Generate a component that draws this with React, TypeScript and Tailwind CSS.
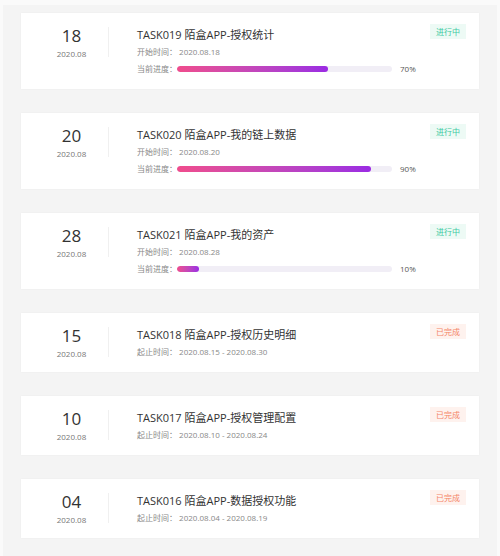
type Task = {
  day: string;
  code: string;
  name: string;
  done: boolean;
  start: string;
  end?: string;
  progress?: number;
};

const tasks: Task[] = [
  { day: '18', code: 'TASK019', name: '陌盒APP-授权统计', done: false, start: '2020.08.18', progress: 70 },
  { day: '20', code: 'TASK020', name: '陌盒APP-我的链上数据', done: false, start: '2020.08.20', progress: 90 },
  { day: '28', code: 'TASK021', name: '陌盒APP-我的资产', done: false, start: '2020.08.28', progress: 10 },
  { day: '15', code: 'TASK018', name: '陌盒APP-授权历史明细', done: true, start: '2020.08.15', end: '2020.08.30' },
  { day: '10', code: 'TASK017', name: '陌盒APP-授权管理配置', done: true, start: '2020.08.10', end: '2020.08.24' },
  { day: '04', code: 'TASK016', name: '陌盒APP-数据授权功能', done: true, start: '2020.08.04', end: '2020.08.19' },
];

function TaskCard({ task }: { task: Task }) {
  return (
    <div className="flex items-start bg-white pt-[13px] pb-[12px] pr-[13px] shadow-[0_0_2px_rgba(0,0,0,0.04)]">
      <div className="w-[87px] pl-[14px] flex flex-col items-center">
        <div className="text-[17px] leading-[20px] text-[#333]">{task.day}</div>
        <div className="mt-[2px] text-[8px] leading-[12px] text-[#777]">2020.08</div>
      </div>
      <div className="mt-px h-[30px] w-px bg-[#f0f0f0]" />
      <div className="ml-[28px] flex-1">
        <div className="text-[11px] leading-[17px] text-[#333]">
          {task.code} {task.name}
        </div>
        {task.done ? (
          <div className="text-[8px] leading-[17px] text-[#888]">
            起止时间： {task.start} - {task.end}
          </div>
        ) : (
          <>
            <div className="text-[8px] leading-[17px] text-[#888]">开始时间： {task.start}</div>
            <div className="flex items-center h-[17px] text-[8px] text-[#888]">
              <span className="w-[40px]">当前进度：</span>
              <div className="w-[215px] h-[6px] rounded-full bg-[#f1eef6] overflow-hidden">
                <div
                  className="h-full rounded-full bg-gradient-to-r from-[#f04c8c] to-[#9b2ae3]"
                  style={{ width: `${task.progress}%` }}
                />
              </div>
              <span className="ml-[8px] text-[#555]">{task.progress}%</span>
            </div>
          </>
        )}
      </div>
      {task.done ? (
        <span className="mt-[-2px] px-[6px] h-[15px] leading-[15px] text-[8px] text-[#f48467] bg-[#fef2ee]">
          已完成
        </span>
      ) : (
        <span className="mt-[-2px] px-[6px] h-[15px] leading-[15px] text-[8px] text-[#3cc9a1] bg-[#edfaf5]">
          进行中
        </span>
      )}
    </div>
  );
}

export default function App() {
  return (
    <div
      className="w-[500px] h-[556px] bg-[#fafafa] overflow-hidden"
      style={{ fontFamily: '"Open Sans", "Noto Sans CJK SC", sans-serif' }}
    >
      <div className="mx-[3px] mt-[5px] h-[551px] bg-[#f4f4f4] px-[18px] pt-[8px] flex flex-col gap-[24px]">
        {tasks.map((t) => (
          <TaskCard key={t.code} task={t} />
        ))}
      </div>
    </div>
  );
}
